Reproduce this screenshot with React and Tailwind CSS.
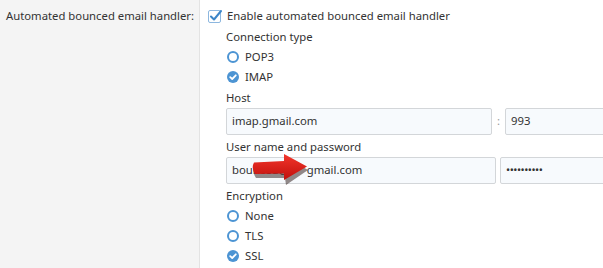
function Radio({ checked, label }) {
  return (
    <div className="flex h-5 items-center gap-[6px] pl-[1px]">
      {checked ? (
        <svg width="12" height="12" viewBox="0 0 12 12">
          <circle cx="6" cy="6" r="6" fill="#4c94d3" />
          <path d="M3.2 6.2 L5.2 8 L8.8 4.3" fill="none" stroke="#fff" strokeWidth="1.8" strokeLinecap="round" strokeLinejoin="round" />
        </svg>
      ) : (
        <svg width="12" height="12" viewBox="0 0 12 12">
          <circle cx="6" cy="6" r="5" fill="#fff" stroke="#4c94d3" strokeWidth="2" />
        </svg>
      )}
      <span>{label}</span>
    </div>
  )
}

function Field({ className, children }) {
  return (
    <div className={`flex h-[27px] items-center whitespace-nowrap rounded-[2px] border border-[#d3d6d9] bg-[#f7fafd] px-[5px] ${className}`}>
      {children}
    </div>
  )
}

function Arrow() {
  return (
    <svg className="absolute left-[242px] top-[153px]" width="70" height="34" viewBox="0 0 70 34">
      <defs>
        <linearGradient id="ar" x1="0" y1="0" x2="0" y2="1">
          <stop offset="0" stopColor="#f2362c" />
          <stop offset="1" stopColor="#c10f0c" />
        </linearGradient>
      </defs>
      <path d="M12 10 L42 8 L42 1 L65 14 L43 29 L42 22 L13 22 Q9 16 12 10 Z" fill="#2a1614" opacity="0.5" transform="translate(1 3)" />
      <path d="M12 9.5 L42 8 L42 1 L65 13.5 L42 27 L42 20.5 L13 21 Q9 15 12 9.5 Z" fill="url(#ar)" />
    </svg>
  )
}

export default function App() {
  return (
    <div className="relative flex h-[268px] w-[603px] overflow-hidden whitespace-nowrap bg-white font-['Noto_Sans',sans-serif] text-[11.3px] text-[#333]">
      <div className="w-[200px] shrink-0 border-r border-[#e3e3e3] bg-[#f4f4f4] pl-[6px] pt-[6px]">
        <div className="flex h-5 items-center">Automated bounced email handler:</div>
      </div>
      <div className="flex-1 pl-[8px] pt-[6px]">
        <div className="flex h-5 items-center gap-[5px]">
          <svg width="14" height="14" viewBox="0 0 14 14">
            <rect x="0.5" y="1.5" width="12" height="12" rx="1.5" fill="#fff" stroke="#8db7df" />
            <path d="M3 7.5 L6 10.5 L13 2" fill="none" stroke="#3d86c8" strokeWidth="2" strokeLinecap="round" strokeLinejoin="round" />
          </svg>
          <span>Enable automated bounced email handler</span>
        </div>
        <div className="pl-[18px]">
          <div className="mt-[1px] flex h-5 items-center">Connection type</div>
          <Radio label="POP3" />
          <Radio checked label="IMAP" />
          <div className="mt-[1px] flex h-5 items-center">Host</div>
          <div className="flex items-center">
            <Field className="w-[266px]">imap.gmail.com</Field>
            <span className="w-[13px] text-center text-[#999]">:</span>
            <Field className="w-[110px]">993</Field>
          </div>
          <div className="mt-[2px] flex h-5 items-center">User name and password</div>
          <div className="flex items-center gap-[4px]">
            <Field className="w-[270px]">
              bou<span className="inline-block w-[54px]">nced@</span>gmail.com
            </Field>
            <Field className="w-[120px] text-[11px] tracking-[-0.5px]">••••••••••</Field>
          </div>
          <div className="mt-[2px] flex h-5 items-center">Encryption</div>
          <Radio label="None" />
          <Radio label="TLS" />
          <Radio checked label="SSL" />
        </div>
      </div>
      <Arrow />
    </div>
  )
}
